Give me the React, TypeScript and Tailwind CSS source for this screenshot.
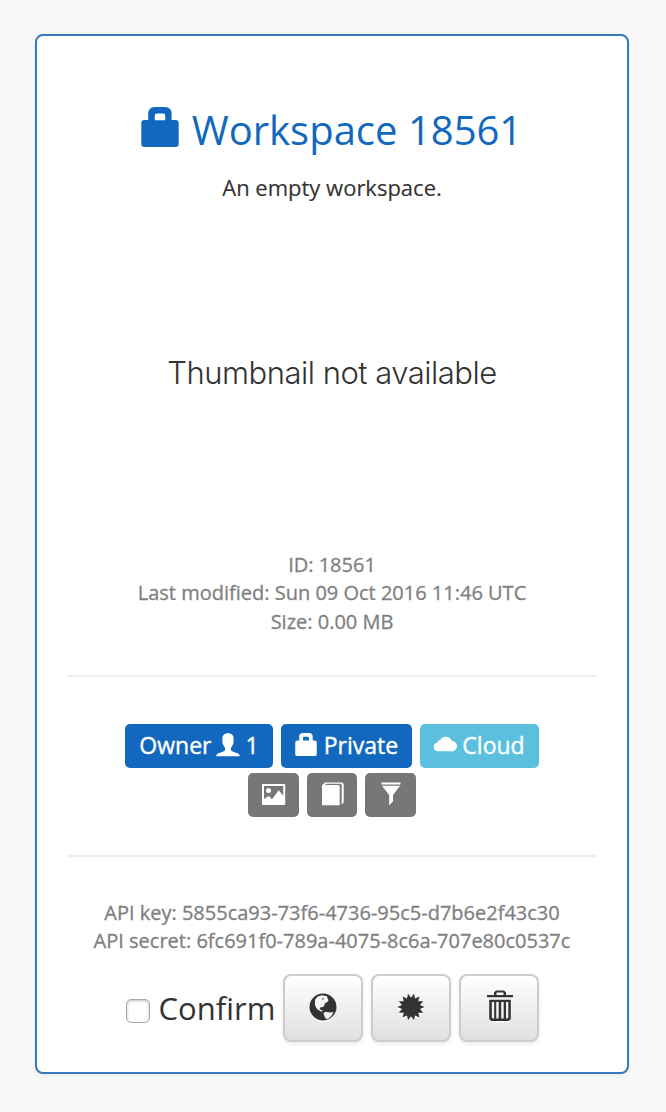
import type { ReactNode } from 'react';

function LockIcon({ className }: { className: string }) {
  return (
    <svg viewBox="0 0 38 40" className={className} fill="currentColor" fillRule="evenodd" aria-hidden>
      <path d="M7.2 13V6.2A6.2 6.2 0 0 1 13.4 0h11A6.2 6.2 0 0 1 30.6 6.2V13h4A3.2 3.2 0 0 1 37.7 16.2v20.6A3.2 3.2 0 0 1 34.5 40h-31A3.2 3.2 0 0 1 .3 36.8V16.2A3.2 3.2 0 0 1 3.5 13zM13.8 13.2h10.4V8.4a2 2 0 0 0-2-2h-6.4a2 2 0 0 0-2 2z" />
    </svg>
  );
}

function UserIcon() {
  return (
    <svg viewBox="0 0 24 24" className="mb-0.5 h-6 w-6" fill="currentColor" aria-hidden>
      <path d="M12 .2c3.400 0 5.700 2.100 5.700 5.300 0 1.200-.1 2.200-.4 3.100.6.300.5 1.500-.3 2.500-.4 1.700-1.200 2.900-2.100 3.800v1.600c0 .9.500 1.300 1.300 1.700l5.800 2.400c1.100.5 1.700 1.200 1.700 2.700H.3c0-1.500.6-2.200 1.700-2.700l5.800-2.400c.8-.4 1.300-.8 1.300-1.700v-1.600c-.9-.9-1.700-2.100-2.100-3.800-.8-1-.9-2.200-.3-2.500-.3-.9-.4-1.900-.4-3.100C6.300 2.300 8.600.2 12 .2z" />
    </svg>
  );
}

function CloudIcon() {
  return (
    <svg viewBox="0 0 24 16" className="mb-[5px] h-4 w-6" fill="currentColor" aria-hidden>
      <path d="M4.700 15.200A4.400 4.400 0 0 1 4.300 6.500 2.900 2.900 0 0 1 7.300 4a6.300 6.300 0 0 1 11.500 1 5.100 5.100 0 1 1 .2 10.200z" />
    </svg>
  );
}

function PictureIcon() {
  return (
    <svg viewBox="0 0 24 22" className="h-[22px] w-6" fill="currentColor" fillRule="evenodd" aria-hidden>
      <path d="M.5 0h22a.7.7 0 0 1 .7.7v19.600a.7.7 0 0 1-.7.7H.5a.7.7 0 0 1-.5-.7V.7A.7.7 0 0 1 .5 0zM2 2v13l4.700-3 3.300 3.200 6.700-9 4.500 5.500V2z" />
      <circle cx="6.500" cy="6.600" r="2.500" />
    </svg>
  );
}

function BookIcon() {
  return (
    <svg viewBox="0 0 22 24" className="mb-[3px] ml-0.5 h-6 w-[22px]" fill="currentColor" aria-hidden>
      <path d="M0 23.300V3.300L3 .5h17.200L21.700 2v18.500l-2 2V3L18.700 1.800H4.300L3 3h13.500l1.200 1.300v19z" />
    </svg>
  );
}

function FilterIcon() {
  return (
    <svg viewBox="0 0 20 24" className="mb-0.5 h-6 w-5" fill="currentColor" aria-hidden>
      <path d="M.5.5h19v2H.5zM1 3.700h18l-7 9.300v6.500L8.200 23.300V13z" />
    </svg>
  );
}

function GlobeIcon() {
  return (
    <svg viewBox="0 0 28 29" className="h-[29px] w-7" aria-hidden>
      <circle cx="14" cy="15.500" r="13.500" fill="#fff" />
      <circle cx="14" cy="14" r="13.500" fill="#333" />
      <path fill="#f7f7f7" d="M6.200 6.500 8.500 3.800l4-1.600 5.500 1 .5 2 1 2.300-1.500 1.800-2.200 1-.6 2.500-1 1.200-2.700.3-1 2 2.200.8 1 1.500-1.700-.2-3.500-2-1.800-2.400-.9-3z" />
      <path fill="#f0f0f0" d="m14.300 20 2.700-1.300 3.500.7 4-.5-1.500 3.300-3 3-2.700 1-1.500-2z" />
      <path fill="#333" d="m13 5.500 1.500-.4.500 1-1.300.7z" />
    </svg>
  );
}

function BurstIcon() {
  const points = Array.from({ length: 28 }, (_, i) => {
    const r = i % 2 === 0 ? 13.5 : 9.3;
    const a = (i * Math.PI) / 14 + Math.PI / 14;
    return `${(14 + r * Math.sin(a)).toFixed(2)},${(14 - r * Math.cos(a)).toFixed(2)}`;
  }).join(' ');
  return (
    <svg viewBox="0 0 28 29" className="h-[29px] w-7" aria-hidden>
      <polygon points={points} fill="#fff" transform="translate(0 1.500)" />
      <polygon points={points} fill="#333" />
    </svg>
  );
}

function TrashIcon() {
  return (
    <svg viewBox="0 0 26 33" className="-mt-[3px] ml-0.5 h-[33px] w-[26px]" aria-hidden>
      <path fill="#fff" d="M4 30h19l-1 2.500H5z" />
      <path fill="#333" fillRule="evenodd" d="M7 5V2.500L9 .5h8l2 2V5h7v2.300H0V5zm2.500 0h7V2.500h-7zM2.200 9.700h21.600v19.300l-2 2H4.200l-2-2zM4.800 12v15.700l.8.800h1.600V12zM9.200 12v16.500h2.500V12zm5 0v16.500h2.500V12zm4.800 0v16.500h1.500l.8-.8V12z" />
    </svg>
  );
}

function Label({ className, children }: { className: string; children: ReactNode }) {
  return (
    <span className={`flex h-11 items-center justify-center whitespace-nowrap rounded-[5px] text-[23px] leading-[42px] text-white [-webkit-text-stroke:0.4px_#fff] ${className}`}>
      {children}
    </span>
  );
}

function IconButton({ label, children }: { label: string; children: ReactNode }) {
  return (
    <button
      type="button"
      aria-label={label}
      className="flex h-[68px] w-20 shrink-0 items-start justify-center rounded-lg border-2 border-[#ccc] bg-linear-to-b from-white to-[#e0e0e0] pt-[17px] shadow-[0_2px_4px_rgba(0,0,0,0.08)]"
    >
      {children}
    </button>
  );
}

export default function App() {
  return (
    <main className="h-[1112px] w-[666px] bg-[#f8f8f8] pl-[35px] pt-[34px] font-['Open_Sans',sans-serif]">
      <section className="flex h-[1040px] w-[594px] flex-col rounded-lg border-2 border-[#337ab7] bg-white px-[30px] text-center shadow-[0_2px_4px_rgba(0,0,0,0.05)]">
        <h1 className="mt-[64px] flex h-[60px] items-center justify-center gap-[13px] pr-px text-[#1268be]">
          <LockIcon className="mb-1.5 h-10 w-[38px]" />
          <span className="whitespace-nowrap text-[40px] leading-[60px]">Workspace 18561</span>
        </h1>
        <p className="mt-[11px] h-[32px] text-[22px] leading-8 text-[#333] [-webkit-text-stroke:0.15px_#333]">An empty workspace.</p>
        <div className="flex h-[347px] items-center justify-center pb-[7px]">
          <span className="whitespace-nowrap font-['Inter',sans-serif] text-[31px] font-light leading-10 tracking-[-0.5px] text-[#333]">
            Thumbnail not available
          </span>
        </div>
        <div className="h-[86px] pt-[0.5px] text-[20px] leading-[28.500px] text-[#808080] [-webkit-text-stroke:0.3px_#808080]">
          <p>ID: 18561</p>
          <p>Last modified: Sun 09 Oct 2016 11:46 UTC</p>
          <p>Size: 0.00 MB</p>
        </div>
        <hr className="mt-[39px] border-t-2 border-[#eee]" />
        <div className="mt-[47px] flex justify-center gap-2">
          <Label className="w-[148px] gap-[5px] bg-[#1268be]">
            <span className="mb-0.5">Owner</span>
            <UserIcon />
            <span className="mb-0.5">1</span>
          </Label>
          <Label className="w-[131px] gap-[7px] bg-[#1268be]">
            <LockIcon className="mb-[3px] h-[23px] w-[22px]" />
            <span className="mb-0.5">Private</span>
          </Label>
          <Label className="w-[119px] gap-[5px] bg-[#5bc0de] pr-px">
            <CloudIcon />
            <span className="mb-0.5">Cloud</span>
          </Label>
        </div>
        <div className="mt-[5px] flex justify-center gap-2">
          <Label className="w-[51px] bg-[#777]"><PictureIcon /></Label>
          <Label className="w-[50px] bg-[#777]"><BookIcon /></Label>
          <Label className="w-[51px] bg-[#777]"><FilterIcon /></Label>
        </div>
        <hr className="mt-[38px] border-t-2 border-[#eee]" />
        <div className="mt-[41px] h-[58px] pt-[0.5px] text-[20px] leading-[28.500px] text-[#808080] [-webkit-text-stroke:0.3px_#808080]">
          <p>API key: 5855ca93-73f6-4736-95c5-d7b6e2f43c30</p>
          <p>API secret: 6fc691f0-789a-4075-8c6a-707e80c0537c</p>
        </div>
        <div className="mt-[18px] flex h-[68px] justify-center gap-2 pl-px">
          <label className="flex items-center gap-[9px] text-[31px] leading-[68px] text-[#333]">
            <input
              type="checkbox"
              className="mt-1.5 h-6 w-6 appearance-none rounded-[5px] border border-[#aaa] bg-white shadow-[inset_0_1px_3px_rgba(0,0,0,0.25)]"
            />
            <span>Confirm</span>
          </label>
          <IconButton label="Publish"><GlobeIcon /></IconButton>
          <IconButton label="Regenerate"><BurstIcon /></IconButton>
          <IconButton label="Delete"><TrashIcon /></IconButton>
        </div>
      </section>
    </main>
  );
}
